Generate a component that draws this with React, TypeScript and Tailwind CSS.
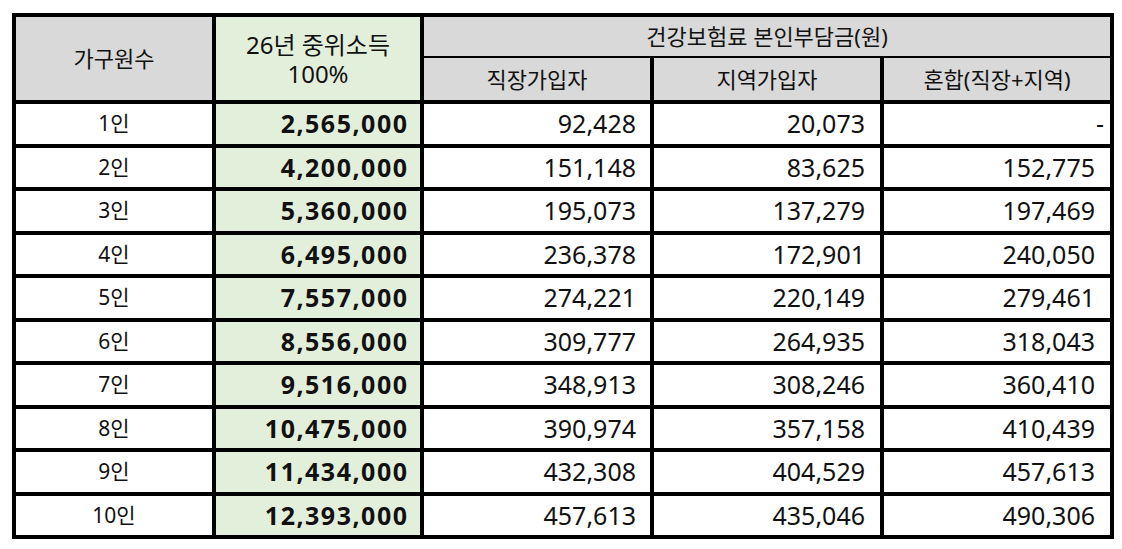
const rows = [
  { n: "1인", income: "2,565,000", work: "92,428", local: "20,073", mixed: "-" },
  { n: "2인", income: "4,200,000", work: "151,148", local: "83,625", mixed: "152,775" },
  { n: "3인", income: "5,360,000", work: "195,073", local: "137,279", mixed: "197,469" },
  { n: "4인", income: "6,495,000", work: "236,378", local: "172,901", mixed: "240,050" },
  { n: "5인", income: "7,557,000", work: "274,221", local: "220,149", mixed: "279,461" },
  { n: "6인", income: "8,556,000", work: "309,777", local: "264,935", mixed: "318,043" },
  { n: "7인", income: "9,516,000", work: "348,913", local: "308,246", mixed: "360,410" },
  { n: "8인", income: "10,475,000", work: "390,974", local: "357,158", mixed: "410,439" },
  { n: "9인", income: "11,434,000", work: "432,308", local: "404,529", mixed: "457,613" },
  { n: "10인", income: "12,393,000", work: "457,613", local: "435,046", mixed: "490,306" },
];

const font = { fontFamily: '"Noto Sans", "Noto Sans CJK KR", sans-serif' };

export default function App() {
  return (
    <div className="min-h-screen bg-white pl-[12px] pt-[13px] text-[#111]" style={font}>
      <div className="flex w-[1102px] flex-col gap-[4px] border-4 border-black bg-black">
        {/* header */}
        <div className="grid h-[83px] grid-cols-[196px_204px_686px] gap-x-[4px]">
          <div className="flex items-center justify-center bg-[#d9d9d9] text-[22px]">가구원수</div>
          <div className="flex flex-col items-center justify-center bg-[#e2efda] text-[24px] leading-[29px]">
            <span>26년 중위소득</span>
            <span>100%</span>
          </div>
          <div className="flex flex-col gap-[2px]">
            <div className="flex h-[39px] items-center justify-center bg-[#d9d9d9] text-[22px]">
              건강보험료 본인부담금(원)
            </div>
            <div className="grid flex-1 grid-cols-3 gap-x-[4px] text-[22px]">
              <div className="flex items-center justify-center bg-[#d9d9d9]">직장가입자</div>
              <div className="flex items-center justify-center bg-[#d9d9d9]">지역가입자</div>
              <div className="flex items-center justify-center bg-[#d9d9d9]">혼합(직장+지역)</div>
            </div>
          </div>
        </div>

        {/* body */}
        {rows.map((r) => (
          <div
            key={r.n}
            className="grid h-[39.5px] grid-cols-[196px_204px_226px_226px_226px] gap-x-[4px] text-[25px]"
          >
            <div className="flex items-center justify-center bg-white text-[21px]">{r.n}</div>
            <div className="flex items-center justify-end bg-[#e2efda] pr-[11.5px] font-bold tracking-[1.5px]">
              {r.income}
            </div>
            <div className="flex items-center justify-end bg-white pr-[14px]">{r.work}</div>
            <div className="flex items-center justify-end bg-white pr-[15px]">{r.local}</div>
            <div className={`flex items-center justify-end bg-white ${r.mixed === "-" ? "pr-[6px]" : "pr-[15px]"}`}>
              {r.mixed}
            </div>
          </div>
        ))}
      </div>
    </div>
  );
}
